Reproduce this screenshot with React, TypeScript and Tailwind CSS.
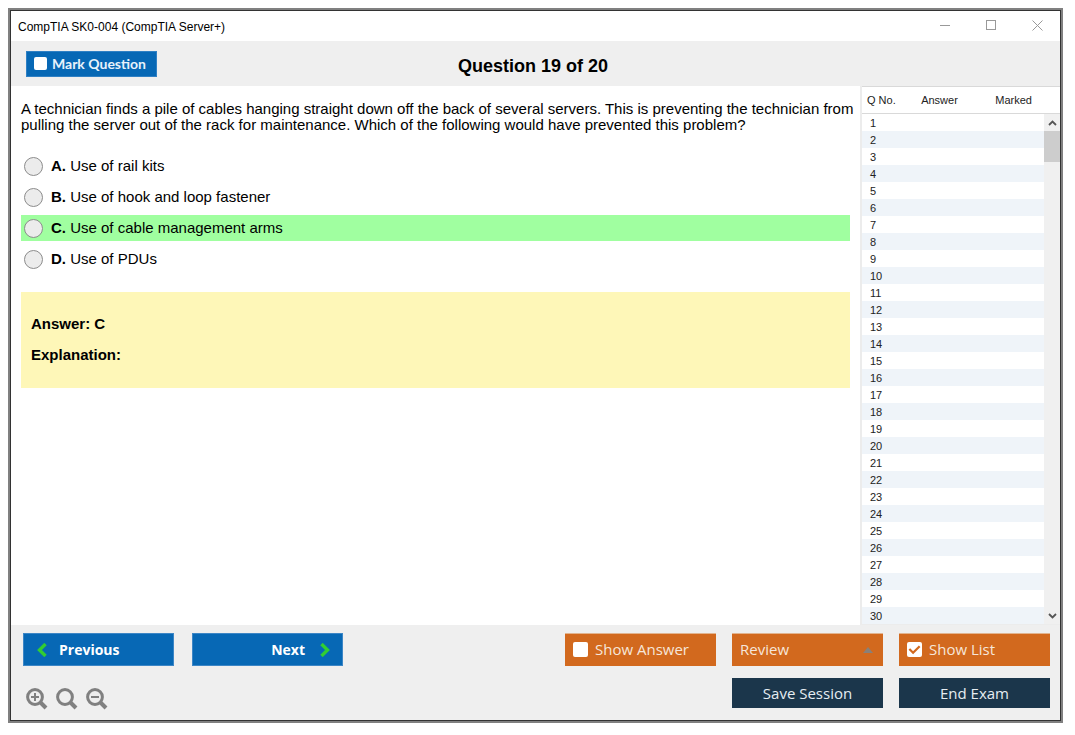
import { useState } from "react";

const options = [
  { key: "A", text: "Use of rail kits" },
  { key: "B", text: "Use of hook and loop fastener" },
  { key: "C", text: "Use of cable management arms" },
  { key: "D", text: "Use of PDUs" },
];

const correctKey = "C";
const rows = Array.from({ length: 30 }, (_, i) => i + 1);

function Tick({ size }: { size: string }) {
  return (
    <svg viewBox="0 0 16 16" className={`pointer-events-none col-start-1 row-start-1 ${size}`} aria-hidden="true">
      <path d="M2.5 7.5 L6.5 11.5 L13.5 4.5" fill="none" stroke="#d2691e" strokeWidth="2.4" />
    </svg>
  );
}

function CheckButton({
  label,
  checked,
  onChange,
}: {
  label: string;
  checked: boolean;
  onChange: (value: boolean) => void;
}) {
  return (
    <label className="flex h-[33px] w-[151px] items-center gap-[7px] border-t border-[#e2b48f] bg-[#d2691e] pb-px pl-2 text-[15px] text-[#f6e6da]">
      <span className="grid place-items-center">
        <input
          type="checkbox"
          checked={checked}
          onChange={(e) => onChange(e.target.checked)}
          className="col-start-1 row-start-1 size-[15px] appearance-none rounded-[2px] bg-white"
        />
        {checked && <Tick size="size-[15px]" />}
      </span>
      {label}
    </label>
  );
}

function Zoom({ label, mark }: { label: string; mark?: string }) {
  return (
    <button type="button" aria-label={label} className="size-[22px]">
      <svg viewBox="0 0 22 22" className="size-[22px]" fill="none" stroke="#808080" aria-hidden="true">
        <circle cx="9" cy="9" r="7.4" strokeWidth="3" />
        <path d="M14 14 L20 20" strokeWidth="4" />
        {mark && <path d={mark} strokeWidth="2" />}
      </svg>
    </button>
  );
}

function TitleBar() {
  return (
    <div className="flex h-[30px] items-center justify-between bg-white pl-[7px]">
      <span className="pt-px text-[12px]">CompTIA SK0-004 (CompTIA Server+)</span>
      <div className="flex h-full pb-[2px]">
        <button type="button" aria-label="Minimize" className="grid w-[46px] place-items-center">
          <svg viewBox="0 0 11 11" className="size-[11px]" stroke="#999" fill="none" aria-hidden="true">
            <path d="M0 5.5 H10" />
          </svg>
        </button>
        <button type="button" aria-label="Maximize" className="grid w-[46px] place-items-center">
          <svg viewBox="0 0 11 11" className="size-[11px]" stroke="#999" fill="none" aria-hidden="true">
            <rect x="0.5" y="0.5" width="9" height="9" />
          </svg>
        </button>
        <button type="button" aria-label="Close" className="grid w-[46px] place-items-center">
          <svg viewBox="0 0 11 11" className="size-[11px]" stroke="#999" fill="none" aria-hidden="true">
            <path d="M0.5 0.5 L10.5 10.5 M10.5 0.5 L0.5 10.5" />
          </svg>
        </button>
      </div>
    </div>
  );
}

function QuestionList() {
  return (
    <aside className="flex w-[200px] shrink-0 border-b border-l-2 border-[#ececec] bg-white text-[11px]">
      <table className="w-[182px] border-collapse text-[#222]">
        <thead>
          <tr className="h-[27px] border-y border-[#d9d9d9]">
            <th scope="col" className="w-[50px] p-0 pl-[5px] text-left font-normal">Q No.</th>
            <th scope="col" className="w-[55px] p-0 text-center font-normal">Answer</th>
            <th scope="col" className="p-0 pr-3 text-right font-normal">Marked</th>
          </tr>
        </thead>
        <tbody>
          {rows.map((n) => (
            <tr key={n} className="h-[17px] leading-[16px] even:bg-[#eff4f9]">
              <td className="p-0 pt-px pl-[8px]">{n}</td>
              <td className="p-0" />
              <td className="p-0" />
            </tr>
          ))}
        </tbody>
      </table>
      <div className="flex flex-1 flex-col">
        <div className="h-[28px] border-y border-[#d9d9d9]" />
        <div className="flex flex-1 flex-col bg-[#f0f0f0]">
          <button type="button" aria-label="Scroll up" className="grid h-[17px] place-items-center">
            <svg viewBox="0 0 9 6" className="h-[6px] w-[9px]" fill="none" stroke="#555" strokeWidth="1.8" aria-hidden="true">
              <path d="M1 5 L4.5 1.5 L8 5" />
            </svg>
          </button>
          <div className="h-[31px] bg-[#cdcdcd]" />
          <div className="flex-1" />
          <button type="button" aria-label="Scroll down" className="grid h-[17px] place-items-center">
            <svg viewBox="0 0 9 6" className="h-[6px] w-[9px]" fill="none" stroke="#555" strokeWidth="1.8" aria-hidden="true">
              <path d="M1 1 L4.5 4.5 L8 1" />
            </svg>
          </button>
        </div>
      </div>
    </aside>
  );
}

export default function App() {
  const [choice, setChoice] = useState("");
  const [marked, setMarked] = useState(false);
  const [showAnswer, setShowAnswer] = useState(false);
  const [showList, setShowList] = useState(true);

  return (
    <div className="flex min-h-screen bg-white pt-2 pr-3 pb-3 pl-2 font-['Liberation_Sans',Arial,sans-serif] text-black">
      <div className="flex flex-1 border-2 border-[#808080]">
        <div className="flex flex-1 flex-col border border-[#333]">
          <TitleBar />

          <header className="grid h-[45px] grid-cols-[1fr_auto_1fr] items-center bg-[#efefef] pr-5 pl-[15px]">
            <label className="flex h-[26px] w-[131px] items-center gap-[5px] border border-[#2f80c4] bg-[#0768b5] pl-[7px] font-['Lato','Open_Sans',sans-serif] text-[14px] font-bold text-[#e8f2fb]">
              <span className="grid place-items-center">
                <input
                  type="checkbox"
                  checked={marked}
                  onChange={(e) => setMarked(e.target.checked)}
                  className="col-start-1 row-start-1 size-[13px] appearance-none rounded-[2px] bg-white"
                />
                {marked && <Tick size="size-[13px]" />}
              </span>
              Mark Question
            </label>
            <h1 className="pt-[5px] text-[18px] font-bold">Question 19 of 20</h1>
          </header>

          <div className="flex flex-1">
            <main className="flex-1 bg-white pt-[15px] pl-[10px] text-[15px] leading-[16px]">
              <p>
                A technician finds a pile of cables hanging straight down off the back of several servers. This is
                preventing the technician from pulling the server out of the rack for maintenance. Which of the
                following would have prevented this problem?
              </p>
              <div role="radiogroup" aria-label="Answers" className="mt-5 mr-[10px] flex flex-col gap-[5px]">
                {options.map((o) => (
                  <label
                    key={o.key}
                    className={`flex h-[26px] items-center gap-2 pl-[3px] ${o.key === correctKey ? "bg-[#a0ffa0]" : ""}`}
                  >
                    <input
                      type="radio"
                      name="answer"
                      value={o.key}
                      checked={choice === o.key}
                      onChange={() => setChoice(o.key)}
                      className="size-[19px] appearance-none rounded-full border border-[#8c8c8c] bg-[#ececec] checked:border-4 checked:border-[#0768b5]"
                    />
                    <span>
                      <b>{o.key}.</b> {o.text}
                    </span>
                  </label>
                ))}
              </div>
              <section className="mt-5 mr-[10px] flex flex-col gap-[15px] bg-[#fef7b8] px-[10px] pt-6 pb-[25px] font-bold">
                <p>Answer: C</p>
                <p>Explanation:</p>
              </section>
            </main>
            {showList && <QuestionList />}
          </div>

          <footer className="flex justify-between bg-[#efefef] pt-2 pr-[10px] pl-3 font-['Open_Sans','Noto_Sans',sans-serif]">
            <div className="flex flex-col justify-between pb-[10px]">
              <div className="flex gap-[18px] text-[14px] font-bold text-white">
                <button type="button" className="flex h-[33px] w-[151px] items-center gap-3 border border-[#3c86c6] bg-[#0768b5] pl-[13px]">
                  <svg viewBox="0 0 10 14" className="h-[14px] w-[10px]" fill="none" stroke="#32cd32" strokeWidth="3.4" aria-hidden="true">
                    <path d="M8.5 1 L2.5 7 L8.5 13" />
                  </svg>
                  Previous
                </button>
                <button type="button" className="flex h-[33px] w-[151px] items-center justify-end gap-[15px] border border-[#3c86c6] bg-[#0768b5] pr-3">
                  Next
                  <svg viewBox="0 0 10 14" className="h-[14px] w-[10px]" fill="none" stroke="#32cd32" strokeWidth="3.4" aria-hidden="true">
                    <path d="M1.5 1 L7.5 7 L1.5 13" />
                  </svg>
                </button>
              </div>
              <div className="flex gap-2 pl-[3px]">
                <Zoom label="Zoom in" mark="M9 5 V13 M5 9 H13" />
                <Zoom label="Reset zoom" />
                <Zoom label="Zoom out" mark="M5 9 H13" />
              </div>
            </div>

            <div className="grid grid-cols-3 gap-x-4 gap-y-3 pb-3 text-[15px]">
              <CheckButton label="Show Answer" checked={showAnswer} onChange={setShowAnswer} />
              <div className="grid h-[33px] w-[151px] items-center">
                <select
                  aria-label="Review"
                  className="col-start-1 row-start-1 h-[33px] w-full appearance-none border-t border-[#e2b48f] bg-[#d2691e] pb-px pl-2 text-[#f6e6da]"
                >
                  <option>Review</option>
                </select>
                <svg viewBox="0 0 10 6" className="pointer-events-none col-start-1 row-start-1 mr-[10px] h-[6px] w-[10px] justify-self-end" aria-hidden="true">
                  <path d="M5 0 L10 6 H0 Z" fill="#8a8078" />
                </svg>
              </div>
              <CheckButton label="Show List" checked={showList} onChange={setShowList} />
              <button type="button" className="col-start-2 h-[30px] bg-[#1b364b] text-[#e6edf2]">
                Save Session
              </button>
              <button type="button" className="h-[30px] bg-[#1b364b] text-[#e6edf2]">
                End Exam
              </button>
            </div>
          </footer>
        </div>
      </div>
    </div>
  );
}
